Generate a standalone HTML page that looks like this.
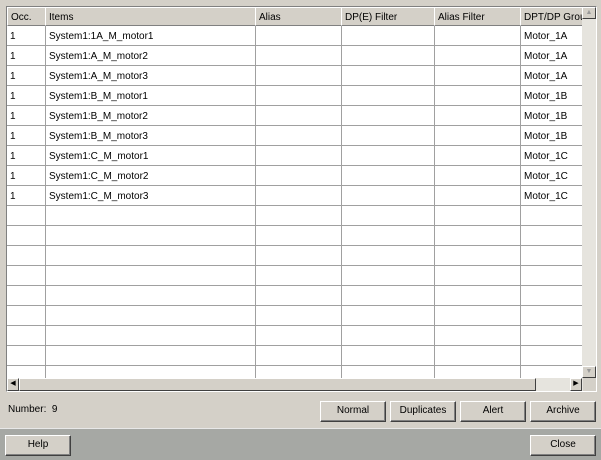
<!DOCTYPE html>
<html><head><style>
*{margin:0;padding:0;box-sizing:border-box}
body{width:601px;height:460px;background:#d4d0c8;font:10px "Liberation Sans",sans-serif;color:#000;position:relative;overflow:hidden}
.abs{position:absolute}
.box{left:6px;top:6px;width:591px;height:386px;border:1px solid;border-color:#808080 #fff #fff #808080;background:#fff;overflow:hidden}
.hdr{top:0;height:19px;background:#d4d0c8;border-right:1px solid #808080;border-bottom:1px solid #808080;border-left:1px solid #fff;border-top:1px solid #fff;padding:4px 0 0 3px;white-space:nowrap;overflow:hidden}
.vl{width:1px;background:#a0a0a0;top:19px;height:360px}
.hl{height:1px;background:#a0a0a0;left:0;width:575px}
.c{height:20px;padding-top:6px;white-space:nowrap}
.btn{background:#d4d0c8;border:1px solid;border-color:#fff #404040 #404040 #fff;box-shadow:inset -1px -1px 0 #808080;text-align:center;line-height:18px;height:21px;width:66px}
.sb{background:#e6e4de}
.ar{background:#d4d0c8;border:1px solid;border-color:#fff #404040 #404040 #fff;font-size:7px;text-align:center;line-height:10px;color:#000}
</style></head><body>
<div class="abs box">
  <div class="abs hdr" style="left:0;width:39px">Occ.</div>
  <div class="abs hdr" style="left:38px;width:211px">Items</div>
  <div class="abs hdr" style="left:248px;width:87px">Alias</div>
  <div class="abs hdr" style="left:334px;width:94px">DP(E) Filter</div>
  <div class="abs hdr" style="left:427px;width:87px">Alias Filter</div>
  <div class="abs hdr" style="left:513px;width:63px">DPT/DP Grou</div>
  <div class="abs vl" style="left:38px"></div>
  <div class="abs vl" style="left:248px"></div>
  <div class="abs vl" style="left:334px"></div>
  <div class="abs vl" style="left:427px"></div>
  <div class="abs vl" style="left:513px"></div>
  <div class="abs" id="rows" style="left:0;top:18px;width:576px"></div>
  <div class="abs sb" style="left:575px;top:0;width:14px;height:371px"></div>
  <div class="abs ar" style="left:575px;top:0;width:14px;height:12px;color:#999">▲</div>
  <div class="abs ar" style="left:575px;top:359px;width:14px;height:12px;color:#999">▼</div>
  <div class="abs sb" style="left:0;top:371px;width:576px;height:13px"></div>
  <div class="abs ar" style="left:0;top:371px;width:12px;height:13px">◀</div>
  <div class="abs ar" style="left:12px;top:371px;width:517px;height:13px"></div>
  <div class="abs ar" style="left:563px;top:371px;width:12px;height:13px">▶</div>
  <div class="abs" style="left:576px;top:371px;width:14px;height:14px;background:#d4d0c8"></div>
</div>
<div class="abs" style="left:8px;top:404px">Number:&nbsp;&nbsp;9</div>
<div class="abs btn" style="left:320px;top:401px">Normal</div>
<div class="abs btn" style="left:390px;top:401px">Duplicates</div>
<div class="abs btn" style="left:460px;top:401px">Alert</div>
<div class="abs btn" style="left:530px;top:401px">Archive</div>
<div class="abs" style="left:0;top:428px;width:601px;height:32px;background:#a6a8a4;border-top:1px solid #e8e8e8"></div>
<div class="abs btn" style="left:5px;top:435px">Help</div>
<div class="abs btn" style="left:530px;top:435px">Close</div>
<script>
var items=["System1:1A_M_motor1","System1:A_M_motor2","System1:A_M_motor3","System1:B_M_motor1","System1:B_M_motor2","System1:B_M_motor3","System1:C_M_motor1","System1:C_M_motor2","System1:C_M_motor3"];
var g=["Motor_1A","Motor_1A","Motor_1A","Motor_1B","Motor_1B","Motor_1B","Motor_1C","Motor_1C","Motor_1C"];
var h="";
for(var i=0;i<18;i++){
 var t=i*20;
 h+='<div class="abs hl" style="top:'+(t+20)+'px"></div>';
 if(i<9){
  h+='<div class="abs c" style="left:3px;top:'+t+'px">1</div>';
  h+='<div class="abs c" style="left:42px;top:'+t+'px">'+items[i]+'</div>';
  h+='<div class="abs c" style="left:517px;top:'+t+'px">'+g[i]+'</div>';
 }
}
document.getElementById('rows').innerHTML=h;
</script>
</body></html>
